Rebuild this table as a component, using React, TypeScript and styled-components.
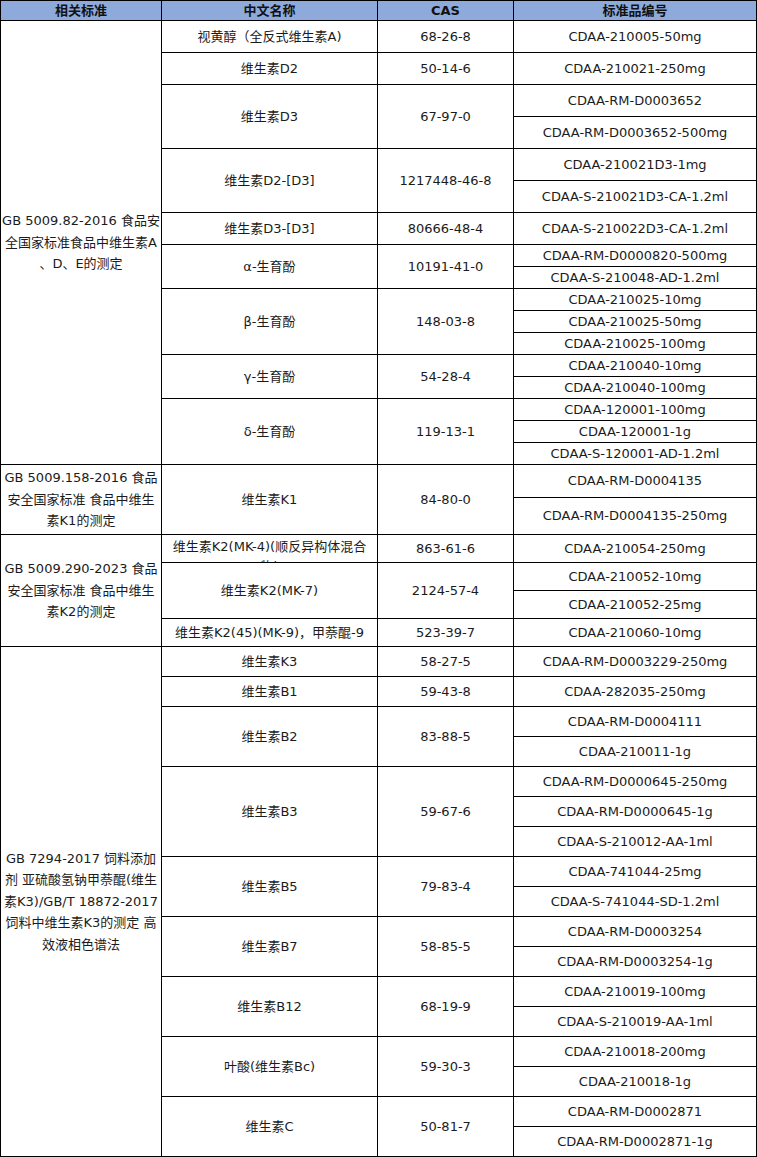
import styled, { createGlobalStyle } from 'styled-components'

const GlobalStyle = createGlobalStyle`
    html, body {
        margin: 0;
        padding: 0;
        background: #ffffff;
    }
`

interface Item {
    name: string
    cas: string
    codes: string[]
    clip?: boolean
}

interface Group {
    std: string[]
    items: Item[]
}

const groups: Group[] = [
    {
        std: ['GB 5009.82-2016 食品安', '全国家标准食品中维生素A', '、D、E的测定'],
        items: [
            { name: '视黄醇（全反式维生素A)', cas: '68-26-8', codes: ['CDAA-210005-50mg'] },
            { name: '维生素D2', cas: '50-14-6', codes: ['CDAA-210021-250mg'] },
            { name: '维生素D3', cas: '67-97-0', codes: ['CDAA-RM-D0003652', 'CDAA-RM-D0003652-500mg'] },
            {
                name: '维生素D2-[D3]',
                cas: '1217448-46-8',
                codes: ['CDAA-210021D3-1mg', 'CDAA-S-210021D3-CA-1.2ml'],
            },
            { name: '维生素D3-[D3]', cas: '80666-48-4', codes: ['CDAA-S-210022D3-CA-1.2ml'] },
            {
                name: 'α-生育酚',
                cas: '10191-41-0',
                codes: ['CDAA-RM-D0000820-500mg', 'CDAA-S-210048-AD-1.2ml'],
            },
            {
                name: 'β-生育酚',
                cas: '148-03-8',
                codes: ['CDAA-210025-10mg', 'CDAA-210025-50mg', 'CDAA-210025-100mg'],
            },
            { name: 'γ-生育酚', cas: '54-28-4', codes: ['CDAA-210040-10mg', 'CDAA-210040-100mg'] },
            {
                name: 'δ-生育酚',
                cas: '119-13-1',
                codes: ['CDAA-120001-100mg', 'CDAA-120001-1g', 'CDAA-S-120001-AD-1.2ml'],
            },
        ],
    },
    {
        std: ['GB 5009.158-2016 食品', '安全国家标准 食品中维生', '素K1的测定'],
        items: [
            { name: '维生素K1', cas: '84-80-0', codes: ['CDAA-RM-D0004135', 'CDAA-RM-D0004135-250mg'] },
        ],
    },
    {
        std: ['GB 5009.290-2023 食品', '安全国家标准 食品中维生', '素K2的测定'],
        items: [
            {
                name: '维生素K2(MK-4)(顺反异构体混合物)',
                cas: '863-61-6',
                codes: ['CDAA-210054-250mg'],
                clip: true,
            },
            { name: '维生素K2(MK-7)', cas: '2124-57-4', codes: ['CDAA-210052-10mg', 'CDAA-210052-25mg'] },
            { name: '维生素K2(45)(MK-9)，甲萘醌-9', cas: '523-39-7', codes: ['CDAA-210060-10mg'] },
        ],
    },
    {
        std: [
            'GB 7294-2017 饲料添加',
            '剂 亚硫酸氢钠甲萘醌(维生',
            '素K3)/GB/T 18872-2017',
            '饲料中维生素K3的测定 高',
            '效液相色谱法',
        ],
        items: [
            { name: '维生素K3', cas: '58-27-5', codes: ['CDAA-RM-D0003229-250mg'] },
            { name: '维生素B1', cas: '59-43-8', codes: ['CDAA-282035-250mg'] },
            { name: '维生素B2', cas: '83-88-5', codes: ['CDAA-RM-D0004111', 'CDAA-210011-1g'] },
            {
                name: '维生素B3',
                cas: '59-67-6',
                codes: ['CDAA-RM-D0000645-250mg', 'CDAA-RM-D0000645-1g', 'CDAA-S-210012-AA-1ml'],
            },
            { name: '维生素B5', cas: '79-83-4', codes: ['CDAA-741044-25mg', 'CDAA-S-741044-SD-1.2ml'] },
            { name: '维生素B7', cas: '58-85-5', codes: ['CDAA-RM-D0003254', 'CDAA-RM-D0003254-1g'] },
            { name: '维生素B12', cas: '68-19-9', codes: ['CDAA-210019-100mg', 'CDAA-S-210019-AA-1ml'] },
            { name: '叶酸(维生素Bc)', cas: '59-30-3', codes: ['CDAA-210018-200mg', 'CDAA-210018-1g'] },
            { name: '维生素C', cas: '50-81-7', codes: ['CDAA-RM-D0002871', 'CDAA-RM-D0002871-1g'] },
        ],
    },
]

// inner heights of every body row (the 1px grid lines sit between them)
const ROW_HEIGHTS = [
    ...Array(7).fill(31),
    ...Array(10).fill(21),
    32,
    36,
    ...Array(4).fill(27),
    ...Array(17).fill(29),
]

const Sheet = styled.div`
    display: grid;
    grid-template-columns: 160px 215px 135px 242px;
    grid-template-rows: 19px ${ROW_HEIGHTS.map((h) => `${h}px`).join(' ')};
    gap: 1px;
    padding: 1px;
    width: 757px;
    box-sizing: border-box;
    background: #000000;
    font-family: 'DejaVu Sans', 'Noto Sans CJK SC', sans-serif;
    font-size: 13px;
    color: #1b1b1b;
`

const HeadCell = styled.div`
    display: flex;
    align-items: center;
    justify-content: center;
    background: #8eaadb;
    font-weight: bold;
    color: #111111;
    line-height: 19px;
`

interface CellProps {
    $col: number
    $row: number
    $span: number
    $clip?: boolean
}

const Cell = styled.div<CellProps>`
    grid-column: ${(p) => p.$col};
    grid-row: ${(p) => `${p.$row} / span ${p.$span}`};
    display: flex;
    align-items: ${(p) => (p.$clip ? 'flex-start' : 'center')};
    justify-content: center;
    text-align: center;
    background: #ffffff;
    overflow: hidden;
    padding-top: ${(p) => (p.$clip ? '2px' : '0')};
    line-height: ${(p) => (p.$clip ? '20px' : '18px')};
    white-space: nowrap;
`

const StdText = styled.div`
    line-height: 21.6px;
`

const StdLine = styled.span`
    display: block;
    white-space: nowrap;
`

const ClipText = styled.div`
    white-space: normal;
    width: 100%;
    padding: 0 2px;
    box-sizing: border-box;
`

const renderGroups = () => {
    const cells: JSX.Element[] = []
    let row = 2
    groups.forEach((g, gi) => {
        const total = g.items.reduce((n, it) => n + it.codes.length, 0)
        cells.push(
            <Cell key={`s${gi}`} $col={1} $row={row} $span={total}>
                <StdText>
                    {g.std.map((l) => (
                        <StdLine key={l}>{l}</StdLine>
                    ))}
                </StdText>
            </Cell>
        )
        g.items.forEach((it, ii) => {
            const span = it.codes.length
            cells.push(
                <Cell key={`n${gi}-${ii}`} $col={2} $row={row} $span={span} $clip={it.clip}>
                    {it.clip ? <ClipText>{it.name}</ClipText> : it.name}
                </Cell>,
                <Cell key={`c${gi}-${ii}`} $col={3} $row={row} $span={span}>
                    {it.cas}
                </Cell>
            )
            it.codes.forEach((code, ci) => {
                cells.push(
                    <Cell key={`k${gi}-${ii}-${ci}`} $col={4} $row={row + ci} $span={1}>
                        {code}
                    </Cell>
                )
            })
            row += span
        })
    })
    return cells
}

const App = () => {
    return (
        <>
            <GlobalStyle />
            <Sheet>
                <HeadCell>相关标准</HeadCell>
                <HeadCell>中文名称</HeadCell>
                <HeadCell>CAS</HeadCell>
                <HeadCell>标准品编号</HeadCell>
                {renderGroups()}
            </Sheet>
        </>
    )
}

export default App
